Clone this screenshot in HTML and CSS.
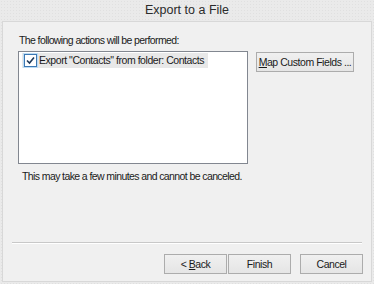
FILE: index.html
```html
<!DOCTYPE html>
<html>
<head>
<meta charset="utf-8">
<link rel="stylesheet" href="styles.css">
</head>
<body>
<div class="window">
  <div class="titlebar">Export to a File</div>
  <div class="panel">
    <div class="label">The following actions will be performed:</div>
    <div class="row">
      <div class="listbox">
        <div class="item">
          <span class="check">
            <svg width="13" height="13" viewBox="0 0 13 13">
              <rect x="0.5" y="0.5" width="12" height="12" fill="#ffffff" stroke="#3d78b3"/>
              <path d="M3 6.5 L5.5 9 L10 3.5" fill="none" stroke="#1f3a5a" stroke-width="1.6"/>
            </svg>
          </span>
          <span class="item-text">Export "Contacts" from folder: Contacts</span>
        </div>
      </div>
      <button class="btn map"><u>M</u>ap Custom Fields ...</button>
    </div>
    <div class="note">This may take a few minutes and cannot be canceled.</div>
    <div class="spacer"></div>
    <div class="sep"></div>
    <div class="buttons">
      <button class="btn nav">&lt; <u>B</u>ack</button>
      <button class="btn nav">Finish</button>
      <button class="btn nav cancel">Cancel</button>
    </div>
  </div>
</div>
</body>
</html>
```
FILE: styles.css
```css
html, body {
  margin: 0;
  padding: 0;
}
body {
  font-family: "Liberation Sans", Arial, sans-serif;
  font-size: 10.5px;
  letter-spacing: -0.45px;
  color: #1a1a1a;
}
.window {
  width: 374px;
  height: 284px;
  background-color: #eaeaea;
  background-image: radial-gradient(#e0e0e0 0.6px, transparent 0.8px);
  background-size: 3px 3px;
  display: flex;
  flex-direction: column;
  box-sizing: border-box;
  padding: 0 2px 2px 2px;
}
.titlebar {
  height: 21px;
  text-align: center;
  font-family: "Liberation Sans", Arial, sans-serif;
  font-size: 12.5px;
  letter-spacing: 0;
  line-height: 20px;
  color: #2b2b2b;
}
.panel {
  flex: 1;
  background: #f0f0f0;
  border: 1px solid #d8d8d8;
  display: flex;
  flex-direction: column;
  padding: 11px 8px 7px 15px;
}
.label {
  line-height: 15px;
  height: 15px;
  padding-left: 1px;
  letter-spacing: -0.6px;
}
.row {
  display: flex;
  align-items: flex-start;
  margin-top: 3px;
}
.listbox {
  box-sizing: border-box;
  width: 230px;
  height: 113px;
  background: #ffffff;
  border: 1px solid #828790;
  padding: 1px 3px;
}
.item {
  display: inline-flex;
  align-items: center;
  background: #e8e8e8;
  height: 15px;
  padding: 0 4px 0 1px;
}
.check {
  display: inline-flex;
  width: 13px;
  height: 13px;
  box-shadow: 0 0 0 1px #bcdcf4;
  margin: 0 2px 0 1px;
}
.item-text {
  line-height: 15px;
  white-space: nowrap;
}
.btn {
  font-family: "Liberation Sans", Arial, sans-serif;
  font-size: 10.5px;
  letter-spacing: -0.45px;
  color: #1a1a1a;
  border: 1px solid #acacac;
  background: linear-gradient(#f0f0f0, #e5e5e5);
  padding: 0;
  margin: 0;
  height: 20px;
  white-space: nowrap;
}
.btn u {
  text-decoration: underline;
}
.map {
  width: 98px;
  margin-left: 8px;
  margin-top: 1px;
}
.note {
  margin-top: 5px;
  padding-left: 4px;
  line-height: 15px;
  letter-spacing: -0.6px;
}
.spacer {
  flex: 1;
}
.sep {
  margin: 0 0 0 -6px;
  width: 350px;
  border-top: 1px solid #c8c8c8;
  border-bottom: 1px solid #ffffff;
  height: 0;
}
.buttons {
  display: flex;
  justify-content: flex-end;
  margin-top: 10px;
  gap: 1px;
}
.nav {
  width: 63px;
}
.cancel {
  margin-left: 8px;
}
```
